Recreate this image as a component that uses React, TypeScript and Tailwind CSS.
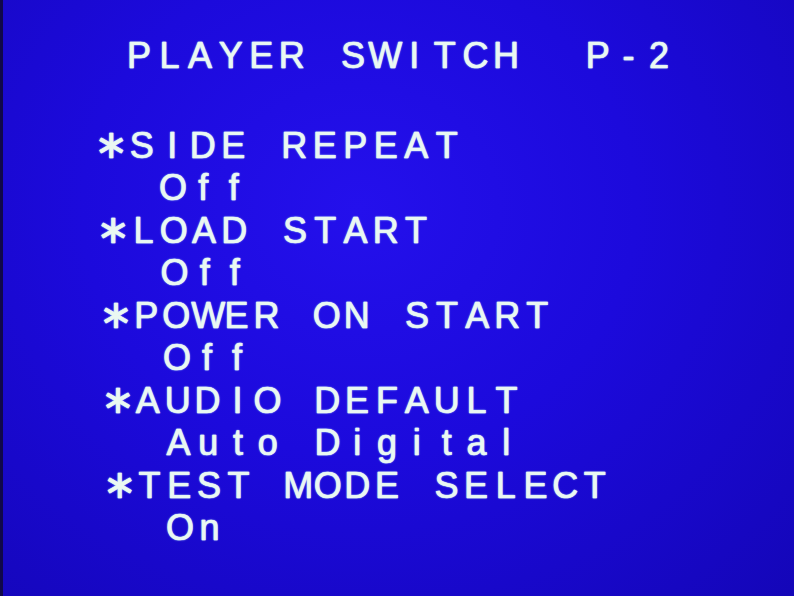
import React from 'react';

// one line of the on-screen menu, drawn on a fixed character grid
type Line = {
  text: string;
  pl: string;
  cw: string;
};

const titleLine: Line = { text: ' PLAYER SWITCH  P-2', pl: 'pl-[90px]', cw: 'w-[30.6px]' };

const menuLines: Line[] = [
  { text: '*SIDE REPEAT', pl: 'pl-[93px]', cw: 'w-[30.5px]' },
  { text: '  Off', pl: 'pl-[94px]', cw: 'w-[30.4px]' },
  { text: '*LOAD START', pl: 'pl-[95px]', cw: 'w-[30.3px]' },
  { text: '  Off', pl: 'pl-[96px]', cw: 'w-[30.2px]' },
  { text: '*POWER ON START', pl: 'pl-[98px]', cw: 'w-[30.1px]' },
  { text: '  Off', pl: 'pl-[99px]', cw: 'w-[30px]' },
  { text: '*AUDIO DEFAULT', pl: 'pl-[100px]', cw: 'w-[29.9px]' },
  { text: '  Auto Digital', pl: 'pl-[101px]', cw: 'w-[29.8px]' },
  { text: '*TEST MODE SELECT', pl: 'pl-[102px]', cw: 'w-[29.7px]' },
  { text: '  On', pl: 'pl-[103px]', cw: 'w-[29.6px]' },
];

const OsdLine: React.FC<{ line: Line }> = ({ line }) => (
  <div className={`flex h-[42.5px] ${line.pl}`}>
    {line.text.split('').map((ch, i) =>
      ch === '*' ? (
        <span key={i} className={`${line.cw} flex shrink-0 items-center justify-center pb-[4px]`}>
          <span className="font-['DejaVu_Sans'] text-[40px] leading-none">∗</span>
        </span>
      ) : (
        <span key={i} className={`${line.cw} shrink-0 text-center`}>
          {ch === ' ' ? '\u00a0' : ch}
        </span>
      )
    )}
  </div>
);

export default function App() {
  return (
    <div className="relative h-[596px] w-[794px] overflow-hidden border-l-[3px] border-[#10084a] bg-[radial-gradient(ellipse_at_45%_35%,#2410ec_0%,#1c0adc_45%,#1406b8_100%)] font-['Liberation_Sans',Arial,sans-serif] text-[36px] leading-[42.5px] text-[#eaf8f2] [-webkit-text-stroke:0.5px_#eaf8f2] [text-shadow:0_0_2px_#a8dcff,0_0_1px_#ffffff]">
      <div className="pt-[35px]">
        <OsdLine line={titleLine} />
        <div className="mt-[47px]">
          {menuLines.map((line, i) => (
            <OsdLine key={i} line={line} />
          ))}
        </div>
      </div>
    </div>
  );
}
